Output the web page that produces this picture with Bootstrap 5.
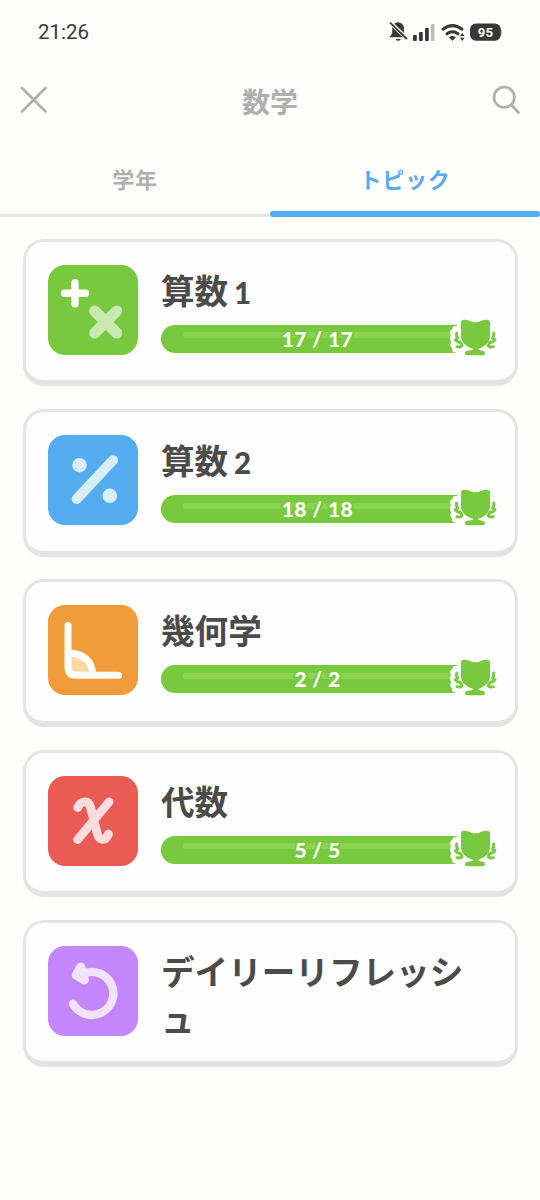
<!DOCTYPE html>
<html lang="ja">
<head>
<meta charset="utf-8">
<meta name="viewport" content="width=device-width, initial-scale=1">
<title>数学</title>
<link href="https://cdn.jsdelivr.net/npm/bootstrap@5.3.0/dist/css/bootstrap.min.css" rel="stylesheet">
<style>
  body { background: #fefefc; color: #4b4b4b; font-family: Lato, "Noto Sans CJK JP", sans-serif; font-weight: 700; }
  svg { display: block; }
  .status-bar { height: 64px; padding: 0 38px; font: 400 20.5px/64px Roboto, sans-serif; color: #3a3a3a; }
  .top-bar { height: 72px; padding: 0 20px; color: #afafaf; }
  .top-bar h1 { font-size: 28px; line-height: 40px; font-weight: 700; padding-top: 3px; }
  .tab-row { height: 81px; }
  .tab-row .nav-link { padding: 26px 0 0; height: 81px; color: #afafaf; font-size: 22px; line-height: 36px; letter-spacing: .8px; position: relative; border-radius: 0; }
  .tab-row .nav-link::after { content: ""; position: absolute; left: 0; right: 0; bottom: 0; height: 3px; background: #e5e5e5; }
  .tab-row .nav-link.active { color: #55acee; }
  .tab-row .nav-link.active::after { height: 6px; border-radius: 3px; background: #55acee; }
  .topics { padding: 21.9px 22.5px 0; gap: 22.75px; }
  .topic { height: 147.5px; border: 3px solid #e4e4e4; border-bottom-width: 6px; border-radius: 21px; background: #fefefe; padding: 23px 19px 0 22.5px; gap: 23px; }
  .tile { width: 90px; height: 90px; border-radius: 17px; flex: none; }
  .topic h2 { font-size: 33.6px; line-height: 48.5px; font-weight: 700; margin: 2px 0 1px; }
  .topic h2.long-name { margin-top: 3px; width: 320px; line-height: 47px; line-break: anywhere; word-break: break-all; }
  .numeral { font-size: 31px; font-weight: 900; margin-left: -2px; display: inline-block; transform: scaleX(.95); transform-origin: left; line-height: 1; }
  .meter { height: 28px; margin-top: 9.4px; position: relative; }
  .meter-fill { height: 28px; width: 302px; border-radius: 14px 0 0 14px; background: #79c93e; padding: 7.5px 0 0 22px; }
  .meter-shine { height: 6px; border-radius: 3px; background: #8cd353; }
  .meter-label { position: absolute; left: 0; width: 313px; top: 0; text-align: center; font-size: 21px; line-height: 28px; font-weight: 900; color: #fff; -webkit-text-stroke: 4px #79c93e; paint-order: stroke fill; letter-spacing: .4px; }
  .trophy { position: absolute; left: 287px; top: -9px; }
</style>
</head>
<body>
<svg width="0" height="0" class="position-absolute" aria-hidden="true">
  <symbol id="trophy" viewBox="0 0 156 132">
    <path fill="#fefefe" d="M28 0H132V132H28Q20 116 25 110Q10 110 12 97Q3 90 10 79Q2 68 9 58Q2 44 13 39Q14 28 27 30Q28 20 28 0Z"/>
    <g fill="#79c93e">
      <path d="M39 20Q39 10 49 11C65 11 68 19 82 19C97 19 99 11 116 11Q126 10 126 20V60C126 80 108 94 91 98V101Q94 103 104 104Q111 105 111 112Q111 118 105 118H57Q51 118 51 112Q51 105 58 104Q71 103 75 101V98C56 94 39 80 39 60Z"/>
    </g>
    <g id="laurel" fill="none" stroke="#79c93e" stroke-width="9" stroke-linecap="round" stroke-linejoin="round">
      <path d="M26 51Q24 59 29 67M22 71Q27 77 36 80M27 92Q37 95 42 89Q41 81 36 78"/>
    </g>
    <use href="#laurel" transform="translate(163 0) scale(-1 1)"/>
  </symbol>
</svg>

<header>
  <div class="status-bar d-flex justify-content-between align-items-center">
    <span>21:26</span>
    <svg width="114" height="24" viewBox="388 19 114 24" fill="#383838">
      <path d="M398 21.2c4 .3 6 3.2 6 6.5v4.7l2.8 3.9h-17.4l2.8-3.9v-4.7c0-3.5 2.2-6.2 5.8-6.5zM395.7 38h5c-.6 2.4-4.4 2.4-5 0z"/>
      <path d="M389 20.5L408 38.5" stroke="#fefefc" stroke-width="3.8"/>
      <path d="M390.5 22.2L406.4 37.5" stroke="#383838" stroke-width="1.8" stroke-linecap="round"/>
      <rect x="413" y="34" width="3.8" height="6" rx="1"/><rect x="419" y="31" width="3.8" height="9" rx="1"/><rect x="425" y="27" width="3.8" height="13" rx="1"/><rect x="431" y="23" width="3.6" height="17" rx="1" fill="#bdbdbd"/>
      <path d="M443 28.2Q452.5 21 462 28.2M447 32.8Q452.5 28.8 458 32.8" fill="none" stroke="#383838" stroke-width="3" stroke-linecap="round"/>
      <path d="M449 36.4Q452.4 33.8 455.8 36.4L452.4 39.8Z"/>
      <path d="M460 35l2.3-3 2.3 3zM460 36.7l2.3 3.2 2.3-3.2z"/>
      <rect x="498" y="27.5" width="4" height="7" rx="2" fill="#bdbdbd"/>
      <rect x="470" y="22.6" width="30.8" height="17.2" rx="6"/>
      <text x="485.4" y="36" text-anchor="middle" font-family="Roboto, sans-serif" font-size="13.2" font-weight="700" fill="#fff">95</text>
    </svg>
  </div>
  <div class="top-bar d-flex justify-content-between align-items-center">
    <svg width="28" height="28" viewBox="0 0 28 28" fill="none" stroke="#afafaf" stroke-width="2.7" stroke-linecap="round"><path d="M2 2L25.5 25.5M25.5 2L2 25.5"/></svg>
    <h1 class="m-0">数学</h1>
    <svg width="28" height="30" viewBox="0 0 28 30" fill="none" stroke="#afafaf" stroke-width="2.7" stroke-linecap="round"><circle cx="12.2" cy="12.2" r="10.2"/><path d="M19.5 20L26.5 27.5"/></svg>
  </div>
</header>

<nav class="nav nav-justified tab-row">
  <a class="nav-link" href="#">学年</a>
  <a class="nav-link active" href="#">トピック</a>
</nav>

<main class="topics d-flex flex-column">
  <section class="topic d-flex">
    <svg class="tile" viewBox="0 0 90 90">
      <rect width="90" height="90" fill="#79c93e"/>
      <path d="M16.5 28.2H37.5M27 17.7V38.7" stroke="#fff" stroke-width="7.4" stroke-linecap="round"/>
      <path d="M46.7 46L68.7 68M68.7 46L46.7 68" stroke="#c9e9b1" stroke-width="11" stroke-linecap="round"/>
    </svg>
    <div class="flex-fill">
      <h2>算数 <span class="numeral">1</span></h2>
      <div class="meter"><div class="meter-fill"><div class="meter-shine"></div></div><span class="meter-label">17 / 17</span><svg class="trophy" width="52" height="44"><use href="#trophy"/></svg></div>
    </div>
  </section>

  <section class="topic d-flex">
    <svg class="tile" viewBox="0 0 90 90">
      <rect width="90" height="90" fill="#55acee"/>
      <g fill="#d6effb"><circle cx="31.5" cy="30.2" r="7.3"/><circle cx="61.8" cy="60.8" r="7.3"/></g>
      <path d="M28.7 64L65 25.2" stroke="#d6effb" stroke-width="10" stroke-linecap="round"/>
    </svg>
    <div class="flex-fill">
      <h2>算数 <span class="numeral">2</span></h2>
      <div class="meter"><div class="meter-fill"><div class="meter-shine"></div></div><span class="meter-label">18 / 18</span><svg class="trophy" width="52" height="44"><use href="#trophy"/></svg></div>
    </div>
  </section>

  <section class="topic d-flex">
    <svg class="tile" viewBox="0 0 90 90">
      <rect width="90" height="90" fill="#f09c38"/>
      <path d="M20 47.5Q43.5 49 44.5 70.3H25Q20 70 20 65Z" fill="#fad7a3"/>
      <path d="M20 20.5V62Q20 70.3 28 70.3H70.5M20 47.8Q43.7 49 45 70.3" fill="none" stroke="#fff" stroke-width="7" stroke-linecap="round"/>
    </svg>
    <div class="flex-fill">
      <h2>幾何学</h2>
      <div class="meter"><div class="meter-fill"><div class="meter-shine"></div></div><span class="meter-label">2 / 2</span><svg class="trophy" width="52" height="44"><use href="#trophy"/></svg></div>
    </div>
  </section>

  <section class="topic d-flex">
    <svg class="tile" viewBox="0 0 90 90">
      <rect width="90" height="90" fill="#eb5b55"/>
      <path d="M29.7 31.5C33 24.5 40.5 23.5 42.5 31L49 57C51 65 57.5 65.5 60.5 58M61 26L29.7 63.5" fill="none" stroke="#fcdcdc" stroke-width="8.8" stroke-linecap="round"/>
    </svg>
    <div class="flex-fill">
      <h2>代数</h2>
      <div class="meter"><div class="meter-fill"><div class="meter-shine"></div></div><span class="meter-label">5 / 5</span><svg class="trophy" width="52" height="44"><use href="#trophy"/></svg></div>
    </div>
  </section>

  <section class="topic d-flex">
    <svg class="tile" viewBox="0 0 90 90">
      <rect width="90" height="90" fill="#c486fb"/>
      <path d="M35 27.8A21.5 21.5 0 1 1 25 57.8" fill="none" stroke="#f1e3fd" stroke-width="8.4" stroke-linecap="round"/>
      <path d="M32.7 21.2L28.5 29L36.3 33.8Z" fill="#f1e3fd" stroke="#f1e3fd" stroke-width="9.4" stroke-linejoin="round"/>
    </svg>
    <div class="flex-fill">
      <h2 class="long-name">デイリーリフレッシュ</h2>
    </div>
  </section>
</main>
<script src="https://cdn.jsdelivr.net/npm/bootstrap@5.3.0/dist/js/bootstrap.bundle.min.js"></script>
</body>
</html>
